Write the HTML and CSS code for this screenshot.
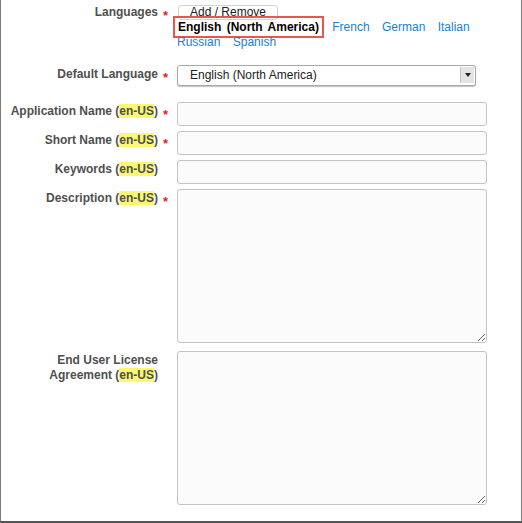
FILE: index.html
```html
<!DOCTYPE html>
<html lang="en">
<head>
<meta charset="utf-8">
<title>App Details</title>
<link rel="stylesheet" href="styles.css">
</head>
<body>
<div class="frame">
  <div class="row row-lang">
    <div class="label">Languages</div>
    <div class="req">*</div>
    <div class="field">
      <button class="btn" type="button">Add / Remove</button>
      <div class="langs"><span class="lang selected">English (North America)</span> <a class="lang" href="#">French</a> <a class="lang" href="#">German</a> <a class="lang" href="#">Italian</a> <a class="lang" href="#">Russian</a> <a class="lang" href="#">Spanish</a></div>
    </div>
  </div>

  <div class="row row-select">
    <div class="label">Default Language</div>
    <div class="req">*</div>
    <div class="field">
      <div class="select">
        <span class="select-text">English (North America)</span>
        <span class="select-arrow"><span class="tri"></span></span>
      </div>
    </div>
  </div>

  <div class="row row-first">
    <div class="label">Application Name (<mark class="loc">en-US</mark>)</div>
    <div class="req">*</div>
    <div class="field"><input class="input" type="text"></div>
  </div>

  <div class="row row-next">
    <div class="label">Short Name (<mark class="loc">en-US</mark>)</div>
    <div class="req">*</div>
    <div class="field"><input class="input" type="text"></div>
  </div>

  <div class="row row-next">
    <div class="label">Keywords (<mark class="loc">en-US</mark>)</div>
    <div class="req"></div>
    <div class="field"><input class="input" type="text"></div>
  </div>

  <div class="row row-next">
    <div class="label">Description (<mark class="loc">en-US</mark>)</div>
    <div class="req">*</div>
    <div class="field"><textarea class="area"></textarea></div>
  </div>

  <div class="row row-eula">
    <div class="label">End User License Agreement (<mark class="loc">en-US</mark>)</div>
    <div class="req"></div>
    <div class="field"><textarea class="area area-eula"></textarea></div>
  </div>
</div>
</body>
</html>
```

FILE: styles.css
```css
html, body {
  margin: 0;
  padding: 0;
  background: #ffffff;
}

body {
  font-family: "Liberation Sans", Arial, Helvetica, sans-serif;
  font-size: 12px;
  line-height: 15px;
  color: #222222;
}

.frame {
  width: 522px;
  height: 523px;
  box-sizing: border-box;
  border-left: 1px solid #7a7a7a;
  border-right: 1px solid #7a7a7a;
  border-bottom: 2px solid #555555;
  padding-top: 5px;
  display: flex;
  flex-direction: column;
}

.row {
  display: grid;
  grid-template-columns: 157px 19px 310px;
  align-items: start;
}

.row-select { margin-top: 15px; }
.row-first { margin-top: 16px; }
.row-next { margin-top: 5px; }
.row-eula { margin-top: 8px; }

.label {
  text-align: right;
  font-weight: bold;
  color: #4f4f4f;
  line-height: 15px;
  padding-top: 2px;
}

.row-lang .label { padding-top: 0; }

.loc {
  background: #fbf873;
  color: inherit;
  padding: 0;
}

.req {
  color: #e2241c;
  font-weight: bold;
  font-size: 13px;
  line-height: 15px;
  padding-top: 5px;
  padding-left: 5px;
}

.row-lang .req { padding-top: 3px; }

.field {
  min-width: 0;
}

.btn {
  display: block;
  box-sizing: border-box;
  width: 100px;
  height: 15px;
  margin: 0 0 0 1px;
  padding: 0;
  border: 1px solid #d2d2d2;
  border-radius: 3px;
  background: #ffffff;
  font-family: inherit;
  font-size: 12px;
  line-height: 13px;
  color: #222222;
  text-align: center;
}

.langs {
  line-height: 15px;
}

.lang {
  color: #1a7fd6;
  text-decoration: none;
  margin-right: 9px;
}

.selected {
  color: #000000;
  font-weight: bold;
  word-spacing: 2px;
  border: 2px solid #e5584b;
  padding: 2px 3px;
  margin-left: -4px;
  margin-right: 5px;
}

.select {
  box-sizing: border-box;
  width: 299px;
  height: 21px;
  border: 1px solid #a8a8a8;
  border-radius: 3px;
  background: #ffffff;
  box-shadow: 0 1px 1px rgba(0, 0, 0, 0.25);
  display: flex;
  align-items: stretch;
}

.select-text {
  flex: 1;
  padding-left: 12px;
  line-height: 19px;
  color: #222222;
}

.select-arrow {
  width: 13px;
  margin: 1px 1px 2px 0;
  background: #e4e4e4;
  border-left: 1px solid #c2c2c2;
  display: flex;
  align-items: center;
  justify-content: center;
}

.tri {
  width: 0;
  height: 0;
  border-left: 3px solid transparent;
  border-right: 3px solid transparent;
  border-top: 4px solid #222222;
}

.input,
.area {
  display: block;
  box-sizing: border-box;
  width: 310px;
  margin: 0;
  border: 1px solid #c4c4c4;
  border-radius: 3px;
  background: #fbfbfb;
  font-family: inherit;
  font-size: 12px;
  outline: none;
}

.input {
  height: 24px;
}

.area {
  height: 154px;
  resize: both;
}
```
